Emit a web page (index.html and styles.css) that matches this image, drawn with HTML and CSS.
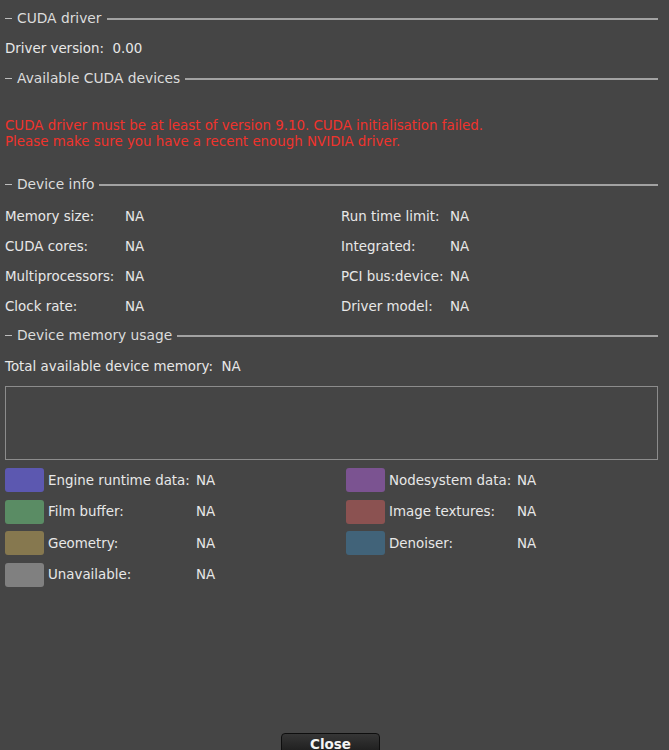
FILE: index.html
```html
<!DOCTYPE html>
<html lang="en">
<head>
    <meta charset="UTF-8">
    <title>CUDA device info</title>
    <link rel="stylesheet" href="styles.css">
</head>
<body>

    <div class="group-title"><span class="dash"></span><span>CUDA driver</span><span class="rule"></span></div>
    <div class="line driver">Driver version:&nbsp; 0.00</div>

    <div class="group-title g2"><span class="dash"></span><span>Available CUDA devices</span><span class="rule"></span></div>
    <p class="error">CUDA driver must be at least of version 9.10. CUDA initialisation failed.<br>Please make sure you have a recent enough NVIDIA driver.</p>

    <div class="group-title g3"><span class="dash"></span><span>Device info</span><span class="rule"></span></div>
    <div class="info">
        <span>Memory size:</span><span>NA</span><span>Run time limit:</span><span>NA</span>
        <span>CUDA cores:</span><span>NA</span><span>Integrated:</span><span>NA</span>
        <span>Multiprocessors:</span><span>NA</span><span>PCI bus:device:</span><span>NA</span>
        <span>Clock rate:</span><span>NA</span><span>Driver model:</span><span>NA</span>
    </div>

    <div class="group-title g4"><span class="dash"></span><span>Device memory usage</span><span class="rule"></span></div>
    <div class="line total">Total available device memory:&nbsp; NA</div>
    <div class="usage-bar"></div>

    <div class="legend">
        <div class="item"><span class="swatch engine"></span><span class="lbl">Engine runtime data:</span><span>NA</span></div>
        <div class="item right"><span class="swatch nodes"></span><span class="lbl">Nodesystem data:</span><span>NA</span></div>
        <div class="item"><span class="swatch film"></span><span class="lbl">Film buffer:</span><span>NA</span></div>
        <div class="item right"><span class="swatch textures"></span><span class="lbl">Image textures:</span><span>NA</span></div>
        <div class="item"><span class="swatch geometry"></span><span class="lbl">Geometry:</span><span>NA</span></div>
        <div class="item right"><span class="swatch denoiser"></span><span class="lbl">Denoiser:</span><span>NA</span></div>
        <div class="item"><span class="swatch unavailable"></span><span class="lbl">Unavailable:</span><span>NA</span></div>
    </div>

    <div class="buttons">
        <button class="close">Close</button>
    </div>

</body>
</html>
```

FILE: styles.css
```css
html, body {
    margin: 0;
    height: 750px;
    overflow: hidden;
}
body {
    background-color: #454545;
    color: #e8e8e8;
    font-family: "DejaVu Sans", Verdana, sans-serif;
    font-size: 13.4px;
    padding: 8px 11px 0 5px;
    box-sizing: border-box;
}
.group-title {
    display: flex;
    align-items: center;
    height: 20px;
    font-size: 13.8px;
    color: #dcdcdc;
}
.group-title .dash {
    width: 7px;
    height: 1px;
    background: #bdbdbd;
    margin: 1px 5px 0 0;
}
.group-title .rule {
    flex: 1;
    height: 2px;
    background: #a2a2a2;
    margin: 1px 0 0 5px;
}
.line {
    height: 20px;
    line-height: 20px;
}
.driver { margin-top: 11px; }
.g2 { margin-top: 9px; }
.error {
    margin: 30px 0 0;
    color: #f0332c;
    line-height: 16px;
}
.g3 { margin-top: 24px; }
.info {
    display: grid;
    grid-template-columns: 120px 216px 109px 1fr;
    grid-auto-rows: 30px;
    align-items: center;
    margin-top: 7px;
}
.g4 { margin-top: 4px; }
.total { margin-top: 12px; }
.usage-bar {
    margin-top: 9px;
    height: 72px;
    border: 1px solid #8c8c8c;
}
.legend {
    display: grid;
    grid-template-columns: 341px 1fr;
    row-gap: 7.5px;
    margin-top: 8px;
}
.item {
    display: flex;
    align-items: center;
    height: 24px;
}
.swatch {
    width: 39px;
    height: 24px;
    border-radius: 3px;
    margin-right: 4px;
}
.lbl { width: 148px; }
.right .lbl { width: 128px; }
.engine { background: #5c58b0; }
.film { background: #5a8c64; }
.geometry { background: #86784f; }
.unavailable { background: #808080; }
.nodes { background: #7b5391; }
.textures { background: #8b5251; }
.denoiser { background: #416379; }
.buttons {
    display: flex;
    justify-content: center;
    margin-top: 146px;
    padding-right: 2px;
}
.close {
    width: 99px;
    height: 26px;
    border: 1px solid #0e0e0e;
    border-radius: 4px;
    background: linear-gradient(#363636, #161616);
    color: #f4f4f4;
    font-family: "DejaVu Sans", Verdana, sans-serif;
    font-size: 13.5px;
    font-weight: bold;
    padding: 0 0 3px;
}
```
